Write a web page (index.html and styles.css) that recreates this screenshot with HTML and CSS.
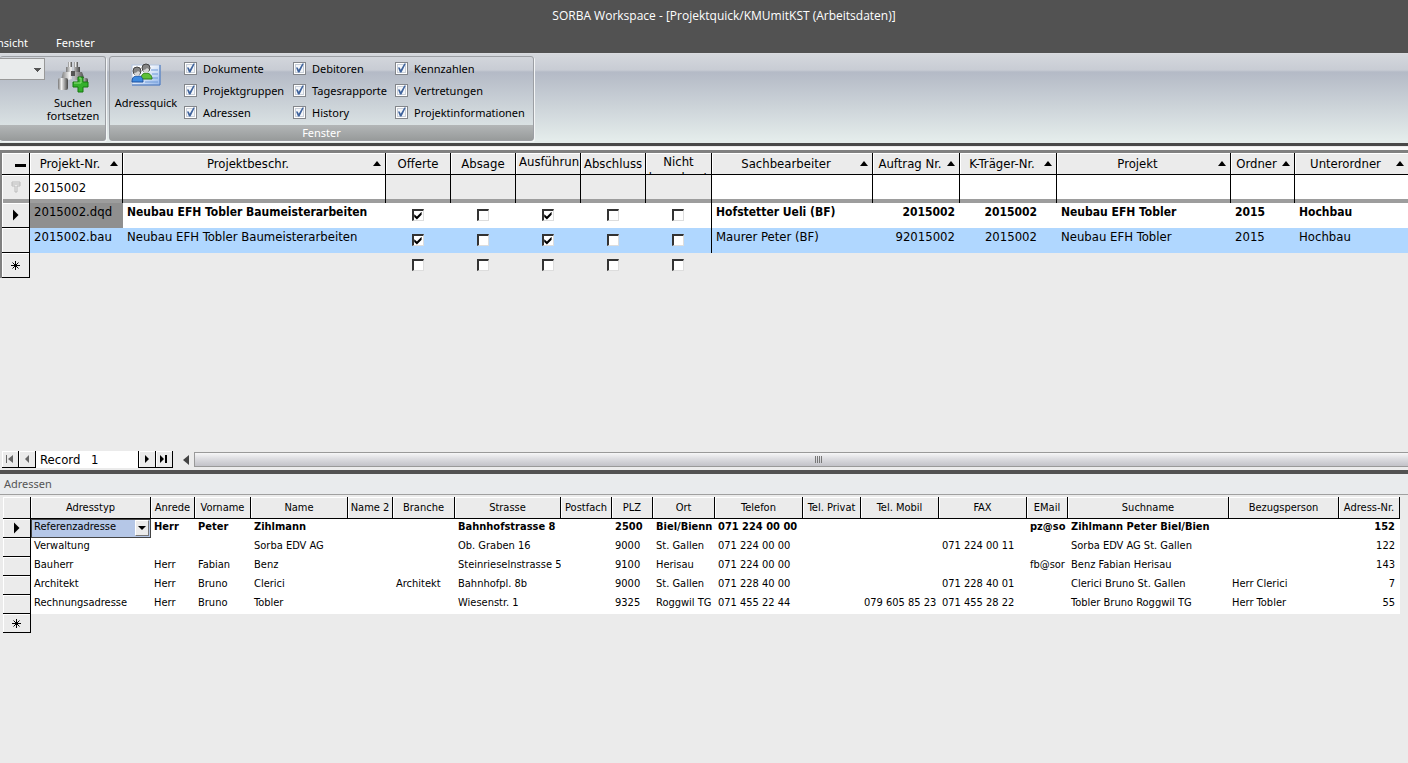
FILE: index.html
```html
<!DOCTYPE html>
<html lang="de">
<head>
  <meta charset="UTF-8">
  <meta name="viewport" content="width=device-width, initial-scale=1.0">
  <title>SORBA Workspace</title>
  <link rel="stylesheet" href="styles.css">
</head>
<body>
  <header class="titlebar">
    <h1>SORBA Workspace - [Projektquick/KMUmitKST (Arbeitsdaten)]</h1>
    <nav class="menu">
      <a href="#">Ansicht</a>
      <a href="#">Fenster</a>
    </nav>
  </header>

  <div class="ribbon">
    <section class="group group-search">
      <div class="group-body">
        <select class="combo" aria-label="Suchbegriff"><option></option></select>
        <button class="big-btn">
          <svg width="34" height="32" viewBox="0 0 34 32">
            <defs>
              <linearGradient id="metal" x1="0" x2="1" y1="0" y2="0">
                <stop offset="0" stop-color="#777"/>
                <stop offset=".35" stop-color="#f2f2f2"/>
                <stop offset="1" stop-color="#444"/>
              </linearGradient>
            </defs>
            <g fill="url(#metal)">
              <rect x="12" y="1" width="4" height="5"/>
              <rect x="18" y="1" width="4" height="5"/>
              <path d="M10 6h6v6h-6zM18 6h6v6h-6z"/>
              <path d="M7 11h9v7l-4 1H5zM18 11h8l3 8H18z"/>
              <rect x="15" y="10" width="4" height="5" fill="#555"/>
              <rect x="2" y="17" width="10" height="12" rx="2"/>
              <rect x="22" y="17" width="10" height="9" rx="2"/>
            </g>
            <path d="M22 16h5v5h5v5h-5v5h-5v-5h-5v-5h5z" fill="#34b02c" stroke="#14780f"/>
            <path d="M23 17h2v5h-7" fill="none" stroke="#8fe07c"/>
          </svg>
          <span>Suchen<br>fortsetzen</span>
        </button>
      </div>
      <div class="group-title">&nbsp;</div>
    </section>

    <section class="group">
      <div class="group-body">
        <button class="big-btn wide">
          <svg width="34" height="32" viewBox="0 0 34 32">
            <defs>
              <linearGradient id="card" x1="0" x2="1" y1="0" y2="1">
                <stop offset=".3" stop-color="#fff"/>
                <stop offset="1" stop-color="#8fb4ea"/>
              </linearGradient>
            </defs>
            <rect x="3" y="4" width="28" height="20" fill="url(#card)" stroke="#b4c6e2"/>
            <path d="M31 4v20H3" fill="none" stroke="#3b6cb8"/>
            <path d="M22 9h7M23 13h6M23 17h6M16 21h13" stroke="#6f9ad8"/>
            <path d="M12 18c0-4 2-6 5-6s6 2 6 6z" fill="#5fc038" stroke="#2d7d17"/>
            <circle cx="17" cy="7" r="4" fill="#858585" stroke="#444"/>
            <path d="M14 9c2 0 3-1 4-2 1 1 2 1 2 1 0 5-5 5-6 1z" fill="#d6d6d6"/>
            <path d="M3 21c0-5 2-6 6-6s5 2 5 6z" fill="#3d8ae0" stroke="#1c4f9c"/>
            <circle cx="8" cy="10" r="4" fill="#858585" stroke="#444"/>
            <path d="M5 12c2 0 3-1 4-2 1 1 2 1 2 1 0 5-5 5-6 1z" fill="#d6d6d6"/>
          </svg>
          <span>Adressquick</span>
        </button>
        <div class="checks">
          <label><input type="checkbox" checked>Dokumente</label>
          <label><input type="checkbox" checked>Debitoren</label>
          <label><input type="checkbox" checked>Kennzahlen</label>
          <label><input type="checkbox" checked>Projektgruppen</label>
          <label><input type="checkbox" checked>Tagesrapporte</label>
          <label><input type="checkbox" checked>Vertretungen</label>
          <label><input type="checkbox" checked>Adressen</label>
          <label><input type="checkbox" checked>History</label>
          <label><input type="checkbox" checked>Projektinformationen</label>
        </div>
      </div>
      <div class="group-title">Fenster</div>
    </section>
  </div>

  <main>
    <section class="projects">
      <table class="grid project-grid">
        <colgroup>
          <col class="w28"><col class="w93"><col class="w263">
          <col class="w65"><col class="w65"><col class="w65"><col class="w65"><col class="w66">
          <col class="w161"><col class="w87"><col class="w97"><col class="w174"><col class="w64"><col>
        </colgroup>
        <thead>
          <tr>
            <th class="sel"><i class="minus"></i></th>
            <th><div class="sort"><span>Projekt-Nr.</span><i class="up"></i></div></th>
            <th><div class="sort"><span>Projektbeschr.</span><i class="up"></i></div></th>
            <th>Offerte</th>
            <th>Absage</th>
            <th><div class="wrap start">Ausführun</div></th>
            <th>Abschluss</th>
            <th><div class="wrap">Nicht berechnet</div></th>
            <th><div class="sort"><span>Sachbearbeiter</span><i class="up"></i></div></th>
            <th><div class="sort"><span>Auftrag Nr.</span><i class="up"></i></div></th>
            <th><div class="sort"><span>K-Träger-Nr.</span><i class="up"></i></div></th>
            <th><div class="sort"><span>Projekt</span><i class="up"></i></div></th>
            <th><div class="sort"><span>Ordner</span><i class="up"></i></div></th>
            <th class="last"><div class="sort"><span>Unterordner</span><i class="up"></i></div></th>
          </tr>
        </thead>
        <tbody>
          <tr class="filter">
            <td class="sel">
              <svg width="10" height="12" viewBox="0 0 10 12"><path d="M1 1h8v4H6v6H4V5H1zM1 3h8" fill="none" stroke="#bbb"/></svg>
            </td>
            <td><input type="text" value="2015002" aria-label="Filter Projekt-Nr."></td>
            <td><input type="text" aria-label="Filter Projektbeschr."></td>
            <td class="off"></td>
            <td class="off"></td>
            <td class="off"></td>
            <td class="off"></td>
            <td class="off"></td>
            <td><input type="text" aria-label="Filter Sachbearbeiter"></td>
            <td><input type="text" aria-label="Filter Auftrag Nr."></td>
            <td><input type="text" aria-label="Filter K-Träger-Nr."></td>
            <td><input type="text" aria-label="Filter Projekt"></td>
            <td><input type="text" aria-label="Filter Ordner"></td>
            <td class="last"><input type="text" aria-label="Filter Unterordner"></td>
          </tr>
          <tr class="current">
            <td class="sel"><i class="play"></i></td>
            <td class="focus">2015002.dqd</td>
            <td>Neubau EFH Tobler Baumeisterarbeiten</td>
            <td class="tick"><input type="checkbox" aria-label="Offerte" checked></td>
            <td class="tick"><input type="checkbox" aria-label="Absage"></td>
            <td class="tick"><input type="checkbox" aria-label="Ausführung" checked></td>
            <td class="tick"><input type="checkbox" aria-label="Abschluss"></td>
            <td class="tick split"><input type="checkbox" aria-label="Nicht berechnet"></td>
            <td>Hofstetter Ueli (BF)</td>
            <td class="num">2015002</td>
            <td class="num inset">2015002</td>
            <td>Neubau EFH Tobler</td>
            <td>2015</td>
            <td>Hochbau</td>
          </tr>
          <tr class="marked">
            <td class="sel"></td>
            <td>2015002.bau</td>
            <td>Neubau EFH Tobler Baumeisterarbeiten</td>
            <td class="tick"><input type="checkbox" aria-label="Offerte" checked></td>
            <td class="tick"><input type="checkbox" aria-label="Absage"></td>
            <td class="tick"><input type="checkbox" aria-label="Ausführung" checked></td>
            <td class="tick"><input type="checkbox" aria-label="Abschluss"></td>
            <td class="tick split"><input type="checkbox" aria-label="Nicht berechnet"></td>
            <td>Maurer Peter (BF)</td>
            <td class="num">92015002</td>
            <td class="num inset">2015002</td>
            <td>Neubau EFH Tobler</td>
            <td>2015</td>
            <td>Hochbau</td>
          </tr>
          <tr class="new">
            <td class="sel"><svg class="star" width="9" height="9" viewBox="0 0 9 9"><path d="M4.500 0v9M0 4.500h9M1.500 1.500l6 6M7.500 1.500l-6 6"/></svg></td>
            <td></td>
            <td></td>
            <td class="tick"><input type="checkbox" aria-label="Offerte"></td>
            <td class="tick"><input type="checkbox" aria-label="Absage"></td>
            <td class="tick"><input type="checkbox" aria-label="Ausführung"></td>
            <td class="tick"><input type="checkbox" aria-label="Abschluss"></td>
            <td class="tick"><input type="checkbox" aria-label="Nicht berechnet"></td>
            <td colspan="6"></td>
          </tr>
        </tbody>
      </table>

      <div class="navigator">
        <button class="nav-btn dim" aria-label="Erster"><svg width="8" height="8" viewBox="0 0 8 8"><path d="M0 0h1v8H0zM7 0v8L2 4z"/></svg></button>
        <button class="nav-btn dim" aria-label="Zurück"><svg width="8" height="8" viewBox="0 0 8 8"><path d="M6 0v8L2 4z"/></svg></button>
        <label for="record">Record</label>
        <input id="record" type="text" value="1">
        <button class="nav-btn" aria-label="Weiter"><svg width="8" height="8" viewBox="0 0 8 8"><path d="M2 0v8l4-4z"/></svg></button>
        <button class="nav-btn" aria-label="Letzter"><svg width="8" height="8" viewBox="0 0 8 8"><path d="M0 0v8l4-4zM5 0h2v8H5z"/></svg></button>
        <button class="scroll-left" aria-label="Nach links"><svg width="6" height="10" viewBox="0 0 6 10"><path d="M6 0v10L0 5z"/></svg></button>
        <div class="scroll-thumb"><i></i><i></i><i></i><i></i></div>
      </div>
    </section>

    <section class="addresses">
      <h2>Adressen</h2>
      <table class="grid address-grid">
        <colgroup>
          <col class="w28"><col class="w120"><col class="w44"><col class="w56"><col class="w97">
          <col class="w45"><col class="w62"><col class="w106"><col class="w51"><col class="w41">
          <col class="w62"><col class="w88"><col class="w58"><col class="w78"><col class="w88">
          <col class="w41"><col class="w161"><col class="w110"><col class="w61">
        </colgroup>
        <thead>
          <tr>
            <th class="sel"></th>
            <th>Adresstyp</th>
            <th>Anrede</th>
            <th>Vorname</th>
            <th>Name</th>
            <th>Name 2</th>
            <th>Branche</th>
            <th>Strasse</th>
            <th>Postfach</th>
            <th>PLZ</th>
            <th>Ort</th>
            <th>Telefon</th>
            <th>Tel. Privat</th>
            <th>Tel. Mobil</th>
            <th>FAX</th>
            <th>EMail</th>
            <th>Suchname</th>
            <th>Bezugsperson</th>
            <th>Adress-Nr.</th>
          </tr>
        </thead>
        <tbody>
          <tr class="current">
            <td class="sel"><i class="play"></i></td>
            <td class="picker">
              <div>
                <select aria-label="Adresstyp"><option>Referenzadresse</option></select>
                <span><i></i></span>
              </div>
            </td>
            <td>Herr</td><td>Peter</td><td>Zihlmann</td><td></td><td></td>
            <td>Bahnhofstrasse 8</td><td></td><td>2500</td><td>Biel/Bienn</td>
            <td>071 224 00 00</td><td></td><td></td><td></td>
            <td>pz@so</td><td>Zihlmann Peter Biel/Bien</td><td></td><td class="num">152</td>
          </tr>
          <tr>
            <td class="sel"></td>
            <td>Verwaltung</td><td></td><td></td><td>Sorba EDV AG</td><td></td><td></td>
            <td>Ob. Graben 16</td><td></td><td>9000</td><td>St. Gallen</td>
            <td>071 224 00 00</td><td></td><td></td><td>071 224 00 11</td>
            <td></td><td>Sorba EDV AG St. Gallen</td><td></td><td class="num">122</td>
          </tr>
          <tr>
            <td class="sel"></td>
            <td>Bauherr</td><td>Herr</td><td>Fabian</td><td>Benz</td><td></td><td></td>
            <td>Steinrieselnstrasse 5</td><td></td><td>9100</td><td>Herisau</td>
            <td>071 224 00 00</td><td></td><td></td><td></td>
            <td>fb@sor</td><td>Benz Fabian Herisau</td><td></td><td class="num">143</td>
          </tr>
          <tr>
            <td class="sel"></td>
            <td>Architekt</td><td>Herr</td><td>Bruno</td><td>Clerici</td><td></td><td>Architekt</td>
            <td>Bahnhofpl. 8b</td><td></td><td>9000</td><td>St. Gallen</td>
            <td>071 228 40 00</td><td></td><td></td><td>071 228 40 01</td>
            <td></td><td>Clerici Bruno St. Gallen</td><td>Herr Clerici</td><td class="num">7</td>
          </tr>
          <tr>
            <td class="sel"></td>
            <td>Rechnungsadresse</td><td>Herr</td><td>Bruno</td><td>Tobler</td><td></td><td></td>
            <td>Wiesenstr. 1</td><td></td><td>9325</td><td>Roggwil TG</td>
            <td>071 455 22 44</td><td></td><td>079 605 85 23</td><td>071 455 28 22</td>
            <td></td><td>Tobler Bruno Roggwil TG</td><td>Herr Tobler</td><td class="num">55</td>
          </tr>
          <tr class="new">
            <td class="sel"><svg class="star" width="9" height="9" viewBox="0 0 9 9"><path d="M4.500 0v9M0 4.500h9M1.500 1.500l6 6M7.500 1.500l-6 6"/></svg></td>
            <td colspan="18"></td>
          </tr>
        </tbody>
      </table>
    </section>
  </main>
</body>
</html>
```

FILE: styles.css
```css
* {
  margin: 0;
  padding: 0;
  box-sizing: border-box;
}
body {
  min-height: 100vh;
  display: flex;
  flex-direction: column;
  background: #ebebeb;
  color: #000;
  font-family: "DejaVu Sans Condensed", "DejaVu Sans", sans-serif;
  font-size: 13px;
  overflow: hidden;
}
button, input, select {
  font: inherit;
  color: inherit;
  border: none;
  background: none;
  border-radius: 0;
  appearance: none;
}

/* title and menu */
.titlebar {
  background: #525252;
  color: #fff;
  font-family: "Noto Sans", sans-serif;
  font-size: 11px;
}
.titlebar h1 {
  height: 33px;
  line-height: 32px;
  padding-left: 40px;
  text-align: center;
  font-family: "Open Sans", sans-serif;
  font-size: 12px;
  font-weight: normal;
}
.menu {
  height: 20px;
  display: flex;
  gap: 28px;
  margin-left: -10px;
  line-height: 20px;
}
.menu a {
  color: #fff;
  text-decoration: none;
}

/* ribbon */
.ribbon {
  display: flex;
  gap: 3px;
  height: 90px;
  padding: 2px 0;
  border-top: 1px solid #d9dbdf;
  background: linear-gradient(#d5d8dd, #c8ccd4 16px, #b4bac6 18px, #e4eceb 86px);
  font-family: "Noto Sans", sans-serif;
  font-size: 11px;
}
.group {
  display: flex;
  flex-direction: column;
  border: 1px solid #9c9fa4;
  border-radius: 3px;
  box-shadow: 1px 1px 0 #f4f6f7;
}
.group-search {
  border-left: none;
}
.group-body {
  flex: 1;
  display: flex;
  align-items: flex-start;
}
.group-title {
  height: 15px;
  line-height: 15px;
  text-align: center;
  color: #fff;
  background: linear-gradient(#b3b6b7, #989b9b);
}
.combo {
  width: 45px;
  height: 22px;
  margin-top: 1px;
  border: 1px solid #999;
  border-left: none;
  background: linear-gradient(#555, #555) 34px 9px / 7px 1px no-repeat,
              linear-gradient(#555, #555) 35px 10px / 5px 1px no-repeat,
              linear-gradient(#555, #555) 36px 11px / 3px 1px no-repeat,
              linear-gradient(#555, #555) 37px 12px / 1px 1px no-repeat, #e9ebec;
}
.big-btn {
  width: 60px;
  padding: 4px 4px 0 0;
  display: flex;
  flex-direction: column;
  align-items: center;
  line-height: 13px;
}
.big-btn span {
  margin-top: 3px;
}
.big-btn.wide {
  width: 74px;
  padding-right: 2px;
}
.checks {
  display: grid;
  grid-template-columns: 109px 102px 138px;
  grid-auto-rows: 22px;
}
.checks label {
  display: flex;
  align-items: center;
  gap: 6px;
  white-space: nowrap;
}
.checks input {
  width: 13px;
  height: 13px;
  border: 1px solid #83868b;
  background: #f4f6f9;
  box-shadow: inset 0 0 0 1px #fff, inset 0 0 0 2px #c9d0da;
}
.checks input::before {
  content: "";
  display: block;
  width: 11px;
  height: 11px;
  background: #3f639c;
  clip-path: polygon(18% 45%, 34% 45%, 43% 65%, 76% 8%, 90% 8%, 50% 92%, 36% 92%);
}

/* grids */
.grid {
  table-layout: fixed;
  border-collapse: separate;
  border-spacing: 0;
}
.grid th {
  font-weight: normal;
  border-right: 1px solid #000;
  border-bottom: 1px solid #000;
  background: #ebebeb;
  box-shadow: inset 1px 1px 0 #fff;
  white-space: nowrap;
  overflow: hidden;
}
.grid td {
  background: #fff;
  white-space: nowrap;
  overflow: hidden;
}
.grid .sel {
  border-right: 1px solid #000;
  border-bottom: 1px solid #000;
  background: #ebebeb;
  box-shadow: inset 1px 1px 0 #fff;
  text-align: center;
  vertical-align: middle;
  padding: 0;
}
.grid .sel svg {
  display: block;
  margin: 0 auto;
}
.grid .current td {
  font-weight: bold;
}
.grid .new td {
  background: #ebebeb;
}
.grid .num {
  text-align: right;
}
.star path {
  stroke: #000;
  fill: none;
}
.play {
  display: block;
  margin: 0 auto;
  width: 6px;
  height: 12px;
  background: #000;
  clip-path: polygon(0 0, 100% 50%, 0 100%);
}
.minus {
  display: block;
  width: 11px;
  height: 3px;
  margin: 4px 3px 0 auto;
  background: #000;
}
.up {
  width: 8px;
  height: 5px;
  background: #000;
  clip-path: polygon(50% 0, 100% 100%, 0 100%);
}

/* projects */
.projects {
  display: flex;
  flex-direction: column;
  height: 331px;
  border-top: 3px solid #484848;
  border-bottom: 4px solid #525252;
}
.project-grid {
  width: 100%;
  border-top: 3px solid #808080;
  border-left: 2px solid #808080;
  box-shadow: 0 -3px 0 #fafafa;
  margin-top: 4px;
}
.project-grid th {
  height: 22px;
}
.sort {
  display: flex;
  align-items: center;
  padding-right: 4px;
}
.sort span {
  flex: 1;
  text-align: center;
}
.wrap {
  height: 20px;
  line-height: 16px;
  white-space: normal;
  overflow: hidden;
}
.wrap.start {
  padding-left: 3px;
  text-align: left;
}
.project-grid td {
  height: 25px;
  padding: 2px 5px 0 4px;
  line-height: 14px;
  vertical-align: top;
}
.project-grid .current td {
  font-size: 12px;
}
.project-grid .filter td {
  height: 28px;
  border-right: 1px solid #000;
  background: linear-gradient(#fff, #fff) 0 0 / 100% 24px no-repeat #9d9d9d;
  padding-top: 4px;
}
.project-grid .filter .off,
.project-grid .filter .sel {
  background: linear-gradient(#ebebeb, #ebebeb) 0 0 / 100% 24px no-repeat #9d9d9d;
}
.project-grid .filter .sel {
  border-bottom: none;
  padding: 0 0 4px;
}
.project-grid .last,
.project-grid .filter .last {
  border-right: none;
}
.filter input {
  display: block;
  width: 100%;
  height: 16px;
}
.project-grid .current .focus {
  background: #8f8f8f;
  font-size: 13px;
  font-weight: normal;
}
.project-grid .inset {
  padding-right: 20px;
}
.project-grid .split {
  border-right: 1px solid #000;
}
.project-grid .marked td:not(.sel) {
  background: #b0d7ff;
}
.project-grid .tick {
  padding: 6px 2px 0 0;
  text-align: center;
}
.tick input {
  display: block;
  width: 12px;
  height: 12px;
  margin: 0 auto;
  background: #fff;
  border: 1px solid #ddd;
  border-top: 2px solid #333;
  border-left: 2px solid #333;
}
.tick input:checked::before {
  content: "";
  display: block;
  width: 9px;
  height: 9px;
  background: #000;
  clip-path: polygon(8% 35%, 38% 60%, 90% 8%, 90% 42%, 38% 95%, 8% 68%);
}

/* record navigator */
.navigator {
  display: flex;
  align-items: stretch;
  height: 17px;
  margin-top: auto;
  margin-right: -34px;
  margin-bottom: 2px;
  padding-left: 2px;
  line-height: 17px;
}
.nav-btn {
  width: 17px;
  display: flex;
  align-items: center;
  justify-content: center;
  background: #ebebeb;
  border-right: 1px solid #000;
  border-bottom: 1px solid #000;
  box-shadow: inset 1px 1px 0 #fff;
}
.nav-btn.dim svg {
  fill: #666;
}
.navigator label {
  width: 50px;
  padding-left: 4px;
  background: #fff;
}
.navigator input {
  width: 53px;
  padding-left: 5px;
  background: #fff;
  border-right: 1px solid #000;
}
.scroll-left {
  width: 21px;
  display: flex;
  align-items: center;
  justify-content: center;
  padding-left: 4px;
  fill: #444;
}
.scroll-thumb {
  flex: 1;
  display: flex;
  align-items: center;
  justify-content: center;
  gap: 1px;
  height: 15px;
  margin-top: 1px;
  border: 1px solid #999;
  background: linear-gradient(#f6f6f7, #dcdce0 45%, #c2c2c8);
}
.scroll-thumb i {
  width: 1px;
  height: 7px;
  background: #777;
}

/* addresses */
.addresses {
  font-size: 11px;
}
.addresses h2 {
  height: 21px;
  line-height: 20px;
  padding-left: 4px;
  background: #e9ebed;
  border-bottom: 1px solid #a0a0a0;
  font-family: "Noto Sans", sans-serif;
  font-size: 11px;
  font-weight: normal;
  color: #555;
}
.address-grid {
  width: 1397px;
  margin: 2px 0 0 3px;
}
.address-grid th {
  height: 22px;
}
.address-grid td {
  height: 19px;
  padding: 1px 5px 0 3px;
  line-height: 14px;
  vertical-align: top;
}
.address-grid td:not(.num) {
  padding-right: 0;
}
.address-grid .current .picker {
  padding: 0;
  font-weight: normal;
}
.picker div {
  display: flex;
  height: 19px;
  padding: 0 1px 1px 0;
  border: 1px solid #444;
  background: #b5c7e7;
}
.picker select {
  flex: 1;
  min-width: 0;
  height: 14px;
  padding-left: 2px;
  line-height: 14px;
}
.picker span {
  width: 14px;
  display: flex;
  align-items: center;
  justify-content: center;
  background: #ebebeb;
  border: 1px solid #fff;
  border-right-color: #777;
  border-bottom-color: #777;
}
.picker i {
  width: 8px;
  height: 4px;
  background: #000;
  clip-path: polygon(0 0, 100% 0, 50% 100%);
}

/* column widths */
.w28 { width: 28px; }
.w41 { width: 41px; }
.w44 { width: 44px; }
.w45 { width: 45px; }
.w51 { width: 51px; }
.w56 { width: 56px; }
.w58 { width: 58px; }
.w61 { width: 61px; }
.w62 { width: 62px; }
.w64 { width: 64px; }
.w65 { width: 65px; }
.w66 { width: 66px; }
.w78 { width: 78px; }
.w87 { width: 87px; }
.w88 { width: 88px; }
.w93 { width: 93px; }
.w97 { width: 97px; }
.w106 { width: 106px; }
.w110 { width: 110px; }
.w120 { width: 120px; }
.w161 { width: 161px; }
.w174 { width: 174px; }
.w263 { width: 263px; }
```
